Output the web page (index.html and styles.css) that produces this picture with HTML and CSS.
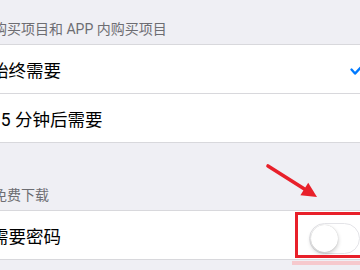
FILE: index.html
```html
<!DOCTYPE html>
<html>
<head>
<meta charset="utf-8">
<link rel="stylesheet" href="styles.css">
</head>
<body>
<div class="page">
  <div class="header header-top"><span class="header-text">购买项目和 APP 内购买项目</span></div>
  <div class="group">
    <div class="row">
      <span class="label">始终需要</span>
      <svg class="check" width="14" height="12" viewBox="0 0 14 12"><path d="M1.5 5.5 L5 9.6 L13 1" fill="none" stroke="#007aff" stroke-width="2.3" stroke-linecap="round" stroke-linejoin="round"/></svg>
    </div>
    <div class="row">
      <span class="label">15 分钟后需要</span>
    </div>
  </div>
  <div class="header header-free"><span class="header-text">免费下载</span></div>
  <div class="group">
    <div class="row">
      <span class="label">需要密码</span>
      <div class="toggle"><div class="knob"></div></div>
    </div>
  </div>
  <div class="highlight-box"></div>
  <div class="highlight-reflection"></div>
  <svg class="arrow" width="360" height="270" viewBox="0 0 360 270">
    <line x1="268" y1="166" x2="306" y2="190" stroke="#e8202a" stroke-width="3.6" stroke-linecap="round"/>
    <polygon points="317,197 300.4,195.2 308.2,182.8" fill="#e8202a"/>
  </svg>
</div>
</body>
</html>
```

FILE: styles.css
```css
html, body {
  margin: 0;
  padding: 0;
}
body {
  width: 360px;
  height: 270px;
  overflow: hidden;
  background: #efeff4;
  font-family: "Roboto", "Noto Sans CJK SC", sans-serif;
}
.page {
  position: relative;
  width: 360px;
  height: 270px;
  overflow: hidden;
}
.header {
  display: flex;
  align-items: flex-end;
  box-sizing: border-box;
  padding-bottom: 6px;
}
.header-top {
  height: 44px;
}
.header-free {
  height: 67px;
}
.header-text {
  margin-left: -7px;
  font-size: 14px;
  line-height: 18px;
  color: #6d6d72;
  white-space: nowrap;
}
.group {
  background: #fff;
  border-top: 1px solid #d8d8dc;
  border-bottom: 1px solid #d8d8dc;
}
.row {
  height: 48px;
  display: flex;
  align-items: center;
  justify-content: space-between;
}
.row + .row {
  border-top: 1px solid #d8d8dc;
}
.label {
  margin-left: -9px;
  font-size: 17.5px;
  color: #000;
  white-space: nowrap;
}
.check {
  margin-right: -4px;
  margin-top: 2px;
}
.toggle {
  box-sizing: border-box;
  width: 51px;
  height: 31px;
  margin-top: 7px;
  border-radius: 16px;
  border: 1.5px solid #e4e4e8;
  background: #fff;
  display: flex;
  align-items: center;
  padding-left: 0.5px;
}
.knob {
  width: 27px;
  height: 27px;
  border-radius: 50%;
  background: #fff;
  box-shadow: 0 2px 4px rgba(0,0,0,0.22), 0 0 1px rgba(0,0,0,0.2);
}
.highlight-box {
  position: absolute;
  left: 295px;
  top: 212px;
  width: 80px;
  height: 46px;
  box-sizing: border-box;
  border: 3px solid #e8202a;
}
.highlight-reflection {
  position: absolute;
  left: 292px;
  top: 261px;
  width: 70px;
  height: 4px;
  background: #f6c9cd;
}
.arrow {
  position: absolute;
  left: 0;
  top: 0;
}
```
